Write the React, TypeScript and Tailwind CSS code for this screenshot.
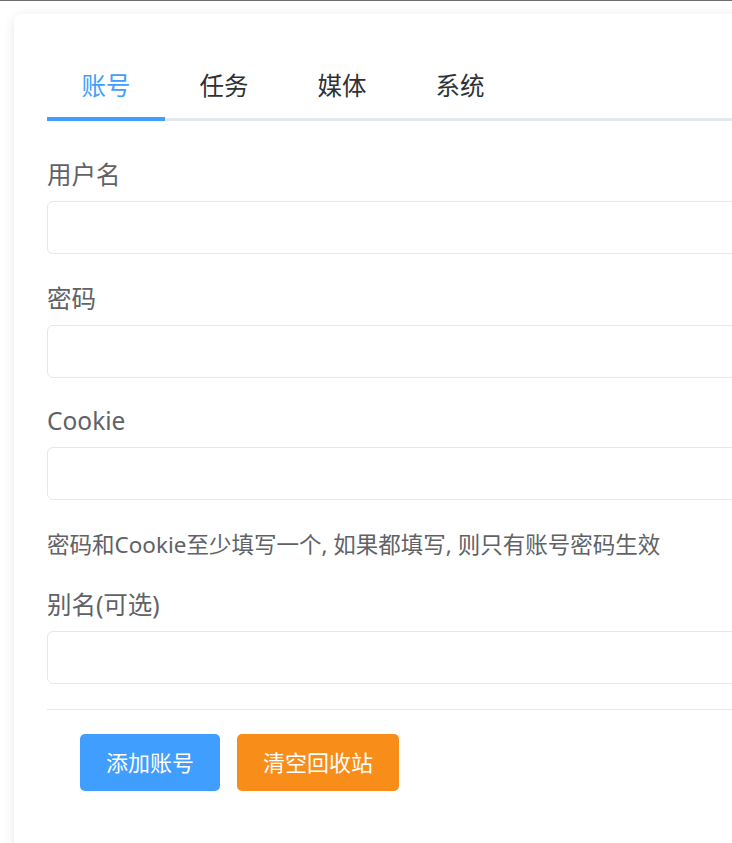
import React from "react";

const font = { fontFamily: '"Noto Sans", "Noto Sans CJK SC", sans-serif' };

function Field({ label, mt }: { label: string; mt: string }) {
  return (
    <div className={mt}>
      <div className="h-[36px] flex items-center text-[24.5px] text-[#606266] leading-none">{label}</div>
      <div className="mt-[8px] h-[53px] rounded-[6px] border border-[#e4e7ed] bg-white" />
    </div>
  );
}

export default function App() {
  const tabs = ["账号", "任务", "媒体", "系统"];
  return (
    <div className="w-[732px] h-[843px] overflow-hidden bg-white" style={font}>
      <div className="h-px bg-[#6e6e6e]" />
      <div className="pt-[13px] pl-[14px]">
        <div className="w-[800px] h-[900px] rounded-[8px] bg-white shadow-[0_2px_12px_rgba(0,0,0,0.1)] pt-[37px] pl-[33px]">
          <div className="flex border-b-[3px] border-[#e4e7ed]">
            {tabs.map((t, i) => (
              <div
                key={t}
                className={`relative h-[67px] w-[118px] pt-[4px] flex items-center justify-center text-[24.5px] ${i === 0 ? "text-[#409eff]" : "text-[#303133]"}`}
              >
                {t}
                {i === 0 && <div className="absolute left-0 right-0 bottom-[-3px] h-[4px] bg-[#409eff]" />}
              </div>
            ))}
          </div>
          <Field label="用户名" mt="mt-[36px]" />
          <Field label="密码" mt="mt-[27px]" />
          <Field label="Cookie" mt="mt-[25px]" />
          <div className="mt-[27px] h-[36px] flex items-center text-[22.5px] text-[#606266] leading-none">
            密码和Cookie至少填写一个, 如果都填写, 则只有账号密码生效
          </div>
          <Field label="别名(可选)" mt="mt-[24px]" />
          <div className="mt-[25px] h-px bg-[#e4e7ed]" />
          <div className="mt-[24px] ml-[33px] flex gap-[17px]">
            <button className="h-[57px] px-[26px] rounded-[5px] bg-[#409eff] text-white text-[22px]">添加账号</button>
            <button className="h-[57px] px-[26px] rounded-[5px] bg-[#f88d19] text-white text-[22px]">清空回收站</button>
          </div>
        </div>
      </div>
    </div>
  );
}
